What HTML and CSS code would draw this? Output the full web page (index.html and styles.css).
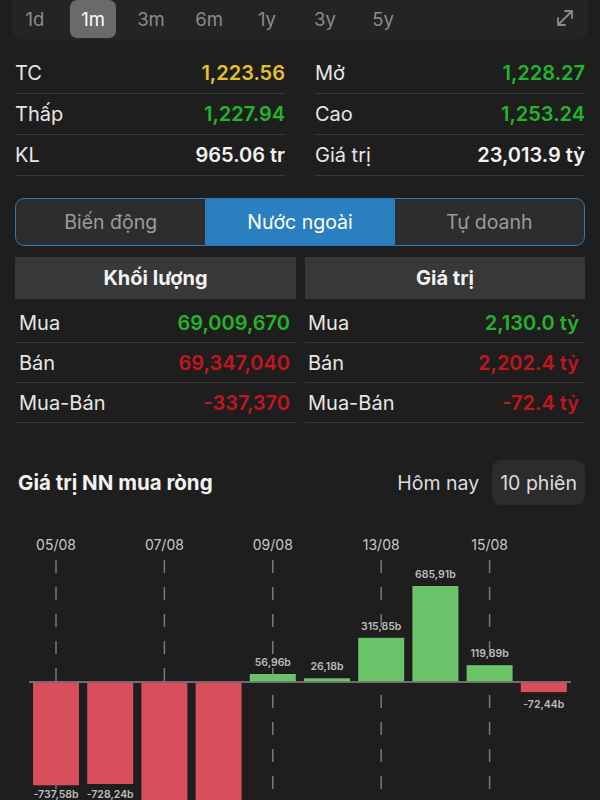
FILE: index.html
```html
<!DOCTYPE html>
<html lang="vi">
<head>
<meta charset="utf-8">
<link rel="stylesheet" href="styles.css">
</head>
<body>
<div class="range-bar">
  <div class="ranges">
    <span class="range">1d</span>
    <span class="range active">1m</span>
    <span class="range">3m</span>
    <span class="range">6m</span>
    <span class="range">1y</span>
    <span class="range">3y</span>
    <span class="range">5y</span>
  </div>
  <svg class="expand" viewBox="0 0 20 20" width="20" height="20">
    <path d="M3 17 L17 3 M10 3 H17 V10 M3 10 V17 H10" fill="none" stroke="#8a8a8a" stroke-width="1.8" stroke-linecap="round" stroke-linejoin="round"/>
  </svg>
</div>

<div class="stats">
  <div class="stat"><span class="label">TC</span><span class="val yellow">1,223.56</span></div>
  <div class="stat"><span class="label">Mở</span><span class="val green">1,228.27</span></div>
  <div class="stat"><span class="label">Thấp</span><span class="val green">1,227.94</span></div>
  <div class="stat"><span class="label">Cao</span><span class="val green">1,253.24</span></div>
  <div class="stat"><span class="label">KL</span><span class="val white">965.06 tr</span></div>
  <div class="stat"><span class="label">Giá trị</span><span class="val white">23,013.9 tỷ</span></div>
</div>

<div class="segments">
  <div class="seg">Biến động</div>
  <div class="seg active">Nước ngoài</div>
  <div class="seg">Tự doanh</div>
</div>

<div class="tables">
  <div class="table left">
    <div class="thead">Khối lượng</div>
    <div class="tbody">
      <div class="trow"><span class="label">Mua</span><span class="val green">69,009,670</span></div>
      <div class="trow"><span class="label">Bán</span><span class="val red">69,347,040</span></div>
      <div class="trow"><span class="label">Mua-Bán</span><span class="val red">-337,370</span></div>
    </div>
  </div>
  <div class="table right">
    <div class="thead">Giá trị</div>
    <div class="tbody">
      <div class="trow"><span class="label">Mua</span><span class="val green">2,130.0 tỷ</span></div>
      <div class="trow"><span class="label">Bán</span><span class="val red">2,202.4 tỷ</span></div>
      <div class="trow"><span class="label">Mua-Bán</span><span class="val red">-72.4 tỷ</span></div>
    </div>
  </div>
</div>

<div class="chart-head">
  <div class="chart-title">Giá trị NN mua ròng</div>
  <div class="chart-opts">
    <span class="opt">Hôm nay</span>
    <span class="opt active">10 phiên</span>
  </div>
</div>

<svg class="chart" viewBox="0 505 600 295" width="600" height="295">
  <g class="dates" font-size="14" fill="#c8c8c8" text-anchor="middle">
    <text x="56" y="550">05/08</text>
    <text x="164.4" y="550">07/08</text>
    <text x="272.8" y="550">09/08</text>
    <text x="381.2" y="550">13/08</text>
    <text x="489.6" y="550">15/08</text>
  </g>
  <g stroke="#7a7a7a" stroke-width="1.5" stroke-dasharray="13 14">
    <line x1="56" y1="560" x2="56" y2="800"/>
    <line x1="164.4" y1="560" x2="164.4" y2="800"/>
    <line x1="272.8" y1="560" x2="272.8" y2="800"/>
    <line x1="381.2" y1="560" x2="381.2" y2="800"/>
    <line x1="489.6" y1="560" x2="489.6" y2="800"/>
  </g>
  <line x1="29" y1="682" x2="571" y2="682" stroke="#8a8a8a" stroke-width="1.5"/>
  <g fill="#d84e5d">
    <rect x="33" y="682.7" width="46" height="102.6"/>
    <rect x="87.2" y="682.7" width="46" height="101.3"/>
    <rect x="141.4" y="682.7" width="46" height="140"/>
    <rect x="195.6" y="682.7" width="46" height="140"/>
    <rect x="520.8" y="682.7" width="46" height="9.4"/>
  </g>
  <g fill="#6cc46a">
    <rect x="249.8" y="674" width="46" height="7.3"/>
    <rect x="304" y="678.3" width="46" height="3"/>
    <rect x="358.2" y="637.8" width="46" height="43.5"/>
    <rect x="412.4" y="586" width="46" height="95.3"/>
    <rect x="466.6" y="665.2" width="46" height="16.1"/>
  </g>
  <g font-size="10.5" font-weight="600" fill="#bdbdbd" text-anchor="middle">
    <text x="56" y="797.5">-737,58b</text>
    <text x="110.2" y="797.5">-728,24b</text>
    <text x="272.8" y="666">56,96b</text>
    <text x="327" y="670">26,18b</text>
    <text x="381.2" y="630">315,85b</text>
    <text x="435.4" y="578">685,91b</text>
    <text x="489.6" y="657">119,89b</text>
    <text x="543.8" y="708">-72,44b</text>
  </g>
</svg>
</body>
</html>
```

FILE: styles.css
```css
* { box-sizing: border-box; }

html, body {
  margin: 0;
  padding: 0;
  background: #1e1e1e;
  color: #ececec;
  font-family: "Inter", "Noto Sans", sans-serif;
  overflow: hidden;
}

.range-bar {
  margin: 0 12px;
  height: 40px;
  background: #242424;
  border-radius: 0 0 12px 12px;
  display: flex;
  justify-content: space-between;
  align-items: flex-start;
}

.ranges {
  display: flex;
  gap: 12px;
}

.range {
  width: 46px;
  height: 38px;
  display: flex;
  align-items: center;
  justify-content: center;
  font-size: 18.5px;
  color: #8c8c8c;
  border-radius: 7px;
}

.range.active {
  background: #6a6a6a;
  color: #ffffff;
}

.expand {
  margin: 8px 13px 0 0;
}

.stats {
  display: grid;
  grid-template-columns: 1fr 1fr;
  column-gap: 30px;
  padding: 0 15px;
  margin-top: 13px;
}

.stat {
  height: 41px;
  display: flex;
  justify-content: space-between;
  align-items: center;
  border-bottom: 1px solid #383838;
  font-size: 20px;
}

.label {
  color: #e6e6e6;
}

.val {
  font-weight: 600;
}

.yellow { color: #e6c02a; }
.green { color: #22b52a; }
.red { color: #c4151c; }
.white { color: #f2f2f2; }

.segments {
  margin: 22px 15px 0;
  height: 48px;
  border: 1.5px solid #2c79b3;
  border-radius: 9px;
  display: flex;
  overflow: hidden;
  background: #2d2d2d;
}

.seg {
  flex: 1;
  display: flex;
  align-items: center;
  justify-content: center;
  font-size: 19.5px;
  color: #9b9b9b;
}

.seg.active {
  background: #2a7fc1;
  color: #ffffff;
}

.tables {
  display: grid;
  grid-template-columns: 281px 280px;
  column-gap: 9px;
  padding: 0 15px;
  margin-top: 11px;
}

.thead {
  height: 42px;
  background: #383838;
  display: flex;
  align-items: center;
  justify-content: center;
  font-weight: 700;
  font-size: 20px;
  color: #f2f2f2;
}

.tbody {
  margin-top: 4px;
}

.trow {
  height: 40px;
  display: flex;
  justify-content: space-between;
  align-items: center;
  border-bottom: 1px solid #363636;
  font-size: 20px;
  padding: 0 6px 0 4px;
}

.right .trow {
  padding: 0 6px 0 3px;
}

.chart-head {
  margin-top: 37px;
  height: 45px;
  display: flex;
  justify-content: space-between;
  align-items: center;
  padding: 0 15px 0 18px;
}

.chart-title {
  font-weight: 700;
  font-size: 20.5px;
  color: #f2f2f2;
}

.chart-opts {
  display: flex;
  gap: 5px;
  height: 45px;
}

.opt {
  display: flex;
  align-items: center;
  padding: 0 8px;
  font-size: 19.5px;
  color: #dcdcdc;
  border-radius: 9px;
}

.opt.active {
  background: #2c2c2c;
}

.chart {
  display: block;
}
```
